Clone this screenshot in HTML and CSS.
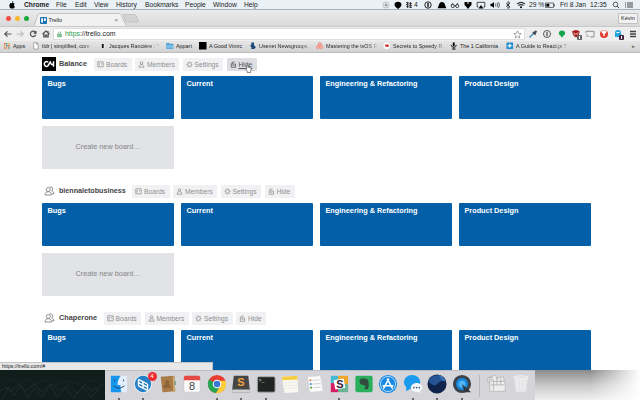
FILE: index.html
```html
<!DOCTYPE html>
<html lang="en">
<head>
<meta charset="utf-8">
<title>Trello</title>
<link rel="stylesheet" href="styles.css">
</head>
<body>
<svg width="0" height="0" class="defs">
  <symbol id="board" viewBox="0 0 7 7"><path d="M.8.8h5.4v5H.8zM2.200 2v2.600M4.700 2v1.600"/></symbol>
  <symbol id="member" viewBox="0 0 7 7"><circle cx="3.5" cy="2.1" r="1.3"/><path d="M1 6.2c0-1.6 1-2.5 2.5-2.5S6 4.600 6 6.200z"/></symbol>
  <symbol id="gear" viewBox="0 0 7 7"><circle cx="3.500" cy="3.500" r="1.900"/><path d="M3.500.5v1M3.500 5.500v1M.5 3.500h1M5.500 3.500h1M1.400 1.400l.7.7M4.900 4.900l.7.7M1.400 5.600l.7-.7M4.900 2.100l.7-.7"/></symbol>
  <symbol id="lock" viewBox="0 0 7 7"><path d="M1.300 3h4.200v3.300H1.300zM2 3V1.500l2.500-.8M2.600 4.400h1.700"/></symbol>
  <symbol id="team" viewBox="0 0 11 10"><circle cx="4.300" cy="3.500" r="2"/><path d="M1 9c0-2.200 1.200-3.300 3.300-3.300S7.500 6.800 7.500 9zM5.500 1.200c2-1 3.500.3 3.200 2-.1.800-.5 1.300-1 1.700 1.400.4 2.200 1.300 2.300 3H8"/></symbol>
</svg>

<header class="menubar">
  <div class="menus">
    <svg class="apple" viewBox="0 0 8 8"><path d="M4 2.200C5 1.700 6.200 1.900 6.700 2.700 5.500 3.500 5.800 5 6.900 5.400 6.400 7 5.400 8 4.200 7.400 2.900 8 1.900 7 1.500 5.800 1 4 2 1.300 4 2.200zM4 1.900C3.900.9 4.500.2 5.300 0 5.400 1 4.800 1.700 4 1.900z"/></svg>
    <b>Chrome</b><span>File</span><span>Edit</span><span>View</span><span>History</span><span>Bookmarks</span><span>People</span><span>Window</span><span>Help</span>
  </div>
  <div class="status">
    <svg viewBox="0 0 10 8"><circle cx="5" cy="4" r="3" fill="none" stroke="#aaa" stroke-width=".7"/><circle cx="5" cy="4" r="1.500" fill="#999"/></svg>
    <svg viewBox="0 0 10 8"><path d="M5 .8c4 0 4.400 4 1.900 5.600L5 8 3.200 6.400C.6 4.800 1 .8 5 .8z"/></svg>
    <svg viewBox="0 0 10 8"><path d="M2 1.500l6 1.200M2 3.400l6 1.200M2 5.300l6 1.200M3.500 1v6M6.500 1v6" stroke="#222" fill="none" stroke-width=".8"/></svg>
    <span>4</span>
    <svg viewBox="0 0 10 8"><circle cx="5" cy="4" r="3.200" fill="none" stroke="#222"/><path d="M4.400 2h1.300v4H4.400z"/></svg>
    <svg viewBox="0 0 10 8"><path d="M.8 6.500C2 5.500 1.500 1 5 1s3 4.500 4.200 5.500v.8H.8z"/></svg>
    <svg viewBox="0 0 10 8"><g fill="none" stroke="#222" stroke-width=".8"><circle cx="2.800" cy="5" r="1.600"/><circle cx="7.200" cy="5" r="1.600"/><path d="M1.300 4.500L3 2M6 4.500L8 2M4.300 4.700h1.400"/></g></svg>
    <svg viewBox="0 0 10 8"><path d="M1.500 1h3v2h1V1h3v3L7 5.500 5 8 3 5.500 1.500 4z"/></svg>
    <svg viewBox="0 0 10 8"><path d="M2.500 6H1.200V1.300h7.600V6H7.500" fill="none" stroke="#333" stroke-width=".9"/><path d="M5 4l2.500 3.500h-5z"/></svg>
    <svg viewBox="0 0 10 8"><path d="M.5 2.800H2L4 1v6L2 5.200H.5z"/><path d="M5.400 2.500q1 1.500 0 3M7 1.800q1.500 2.200 0 4.400M8.500 1q2 3 0 6" fill="none" stroke="#333" stroke-width=".7"/></svg>
    <svg viewBox="0 0 10 8"><path d="M3 2.200l4 3.600L5 7.500V.5l2 1.700-4 3.600" fill="none" stroke="#222" stroke-width=".8"/></svg>
    <svg viewBox="0 0 10 8"><path d="M1 3.200q4-3.800 8 0M2.500 4.700q2.500-2.200 5 0" fill="none" stroke="#333" stroke-width="1.100"/><circle cx="5" cy="6.300" r="1"/></svg>
    <span>29 %</span>
    <svg viewBox="0 0 10 8"><path d="M.5 2h8v4.400h-8zM9.500 3.300v2" fill="none" stroke="#333" stroke-width=".7"/><path d="M1.300 2.800h3v2.800h-3z"/></svg>
    <span>Fri 8 Jan</span><span>12:35</span>
    <svg viewBox="0 0 10 8"><circle cx="4.500" cy="3.500" r="2.300" fill="none" stroke="#333" stroke-width=".8"/><path d="M6.200 5.200L8 7" stroke="#333"/></svg>
    <svg viewBox="0 0 10 8"><path d="M1 2h1M1 4h1M1 6h1M3 2h6M3 4h6M3 6h6" stroke="#333" stroke-width=".9"/></svg>
  </div>
</header>

<main class="window">
  <div class="tabs">
    <div class="lights"><i class="red"></i><i class="amber"></i><i class="green"></i></div>
    <svg class="tab-shape" viewBox="0 0 106 13"><path d="M0 13L4 1.500Q4.400.5 6 .5h79q1.500 0 2 1L92 13z" fill="#f1f1f1"/><path d="M0 13L4 1.500Q4.400.5 6 .5h79q1.500 0 2 1L92 12.500" fill="none" stroke="#b5b5b5" stroke-width=".7"/><path d="M89 2.300q0-.8 1-.8h10.500q1 0 1.500 1l2.500 5.500q.3 1-.8 1H93q-1 0-1.500-1z" fill="#d3d3d3" stroke="#b5b5b5" stroke-width=".6"/></svg>
    <div class="tab">
      <svg class="favicon" viewBox="0 0 7 7"><rect width="7" height="7" rx="1" fill="#1672ae"/><path d="M1.200 1.300h1.800v4.200H1.200zM4 1.300h1.800v2.600H4z" fill="#fff"/></svg>
      <span>Trello</span><span class="close">×</span>
    </div>
    <span class="profile">Kévin</span>
  </div>

  <div class="toolbar">
    <nav class="nav">
      <svg viewBox="0 0 10 8"><path d="M8.500 4H2M4.500 1.300L1.800 4l2.700 2.700"/></svg>
      <svg class="off" viewBox="0 0 10 8"><path d="M1.500 4H8M5.500 1.300L8.200 4 5.500 6.700"/></svg>
      <svg viewBox="0 0 10 8"><path d="M7.300 2.300A2.700 2.700 0 1 0 7.700 4.700M8 .9v2.300H5.600"/></svg>
      <svg viewBox="0 0 10 8"><path d="M1.500 4L5 1l3.500 3M2.800 3.500V7h1.500V5h1.400v2h1.500V3.500M7 1v1.500"/></svg>
    </nav>
    <div class="address">
      <svg class="padlock" viewBox="0 0 6 7"><path d="M.7 3h4.600v3.500H.7z" fill="#8cc79a" stroke="#55a368" stroke-width=".6"/><path d="M1.500 3V1.800q0-1.300 1.500-1.300t1.500 1.300V3" fill="none" stroke="#66a975" stroke-width=".8"/></svg>
      <span class="url"><em>https</em>://trello.com</span>
      <svg class="star" viewBox="0 0 10 10"><path d="M5 .9l1.200 2.800 3 .3-2.300 2 .7 3L5 7.400 2.400 9l.7-3L.8 4l3-.3z" fill="#fff" stroke="#777" stroke-width=".7"/></svg>
    </div>
    <div class="extensions">
      <svg viewBox="0 0 12 12"><path d="M2.500 9.500L7 5" stroke="#4f95bf" stroke-width="1.600"/><path d="M6 4l2.700 2.500M7.500 5L9.500 3" stroke="#414953" stroke-width="2"/></svg>
      <svg viewBox="0 0 12 12"><circle cx="6" cy="6" r="3.500" fill="none" stroke="#444" stroke-width=".9"/><path d="M6 4v4" stroke="#444" stroke-width="1.200"/></svg>
      <svg viewBox="0 0 12 12"><path d="M6 2.500c3.800 0 4 4 1.600 5L6 9.700 4.400 7.500C2 6.500 2.200 2.500 6 2.500z" fill="#14a54b"/></svg>
      <svg viewBox="0 0 12 12"><path d="M2.300 3L6 2l3.500 1c0 3.500-.8 5-3.500 6.500C3.300 8 2.300 6.500 2.300 3z" fill="#a61c18"/><path d="M4 4.500v1.200q0 .8.800.8T6 5.500q1.300 1.500 2 0v-1" fill="none" stroke="#fff" stroke-width=".7"/><rect x="7" y="7" width="5" height="5" rx="1" fill="#666"/><path d="M9.500 8v3" stroke="#fff"/></svg>
      <svg viewBox="0 0 12 12"><path d="M2 5V3.300h8v5.600H6" fill="none" stroke="#777" stroke-width=".8"/><path d="M2 6.500q2 .4 2.500 2.500M2 8.300l.7.700" stroke="#777" fill="none" stroke-width=".7"/></svg>
      <svg viewBox="0 0 12 12"><circle cx="6" cy="6" r="4" fill="#df3f32"/><path d="M3.500 2.800q2.500-1 5 0Q9 5 6 6 3 5 3.500 2.800z" fill="#fff"/><path d="M6 4v4" stroke="#fff" stroke-width="1.400"/></svg>
      <svg viewBox="0 0 12 12"><path d="M2 9V5q0-3 3-3t3 3l1 4z" fill="#23a7df"/><path d="M3.500 4.500h3" stroke="#fff"/><rect x="6" y="7" width="5" height="5" rx="1" fill="#44233f"/><path d="M8.500 8v3" stroke="#fff"/></svg>
      <svg viewBox="0 0 12 12"><path d="M3 3.500h6M3 6h6M3 8.500h6" stroke="#444" stroke-width="1.300"/></svg>
    </div>
  </div>

  <div class="bookmarks">
    <svg viewBox="0 0 8 8"><path d="M1 1h1.600v1.600H1zM1 5.500h1.600v1.600H1zM5.500 3.200h1.600v1.600H5.500z" fill="#e65c49"/><path d="M3.200 1h1.600v1.600H3.200zM5.500 5.500h1.600v1.600H5.500z" fill="#5aa66b"/><path d="M5.500 1h1.600v1.600H5.500zM1 3.200h1.600v1.600H1zM3.200 5.500h1.600v1.600H3.200z" fill="#e8ad40"/><path d="M3.200 3.200h1.600v1.600H3.200z" fill="#4f7cc0"/></svg><span>Apps</span>
    <svg viewBox="0 0 8 8"><path d="M1.800.6h3L6.500 2.300v5.200H1.800zM4.800.6v1.700h1.700" fill="#fff" stroke="#777" stroke-width=".6"/></svg><span class="fade">tldr | simplified, com</span>
    <svg viewBox="0 0 8 8"><path d="M2 1h4v6H2z" fill="#eee"/><path d="M3 2h2v4.500H3z" fill="#111"/></svg><span class="fade">Jacques Rancière : ''</span>
    <svg viewBox="0 0 8 8"><path d="M.3 1h2.800l.7.900h4v5.600H.3z" fill="#4998cd"/><path d="M.5 3h7v4H.5z" fill="#77bee8"/></svg><span>Appart</span>
    <svg viewBox="0 0 8 8"><path d="M0 0h8v8H0z"/></svg><span>A Good Vimrc</span>
    <svg viewBox="0 0 8 8"><path d="M2.500.5h2.800v3L7 5v1.500L5 7.500H2.500V5L1 4l1.500-1z" fill="#1d4779"/></svg><span class="fade">Usenet Newsgroups,</span>
    <svg viewBox="0 0 8 8"><g fill="#f9b0a5" stroke="#e7766a" stroke-width=".6"><circle cx="4" cy="2.200" r="1.600"/><circle cx="2.300" cy="5.300" r="1.800"/><circle cx="5.700" cy="5.300" r="1.800"/></g></svg><span class="fade">Mastering the tvOS F</span>
    <svg viewBox="0 0 8 8"><circle cx="4" cy="4" r="3.500" fill="#fff"/><path d="M1.800 2.700h4.500l-.5 2.500H3z" fill="#ce3a31"/></svg><span class="fade">Secrets to Speedy R</span>
    <svg viewBox="0 0 8 8"><path d="M3 .5h2v4H3z"/><path d="M1.300 3q0 2.700 2.700 2.700T6.700 3M4 5.500V8M2 7.500h4" fill="none" stroke="#222"/></svg><span>The 1 California</span>
    <svg viewBox="0 0 8 8"><rect x=".5" y=".5" width="7" height="7" fill="#258fce"/><path d="M4 1.300l.8 1.900 1.900.8-1.900.8L4 6.700l-.8-1.900L1.300 4l1.900-.8z" fill="#fff"/></svg><span class="fade">A Guide to React.js T</span>
    <span>»</span>
  </div>

  <div class="page">
    <section class="org">
      <div class="org-head">
        <svg class="logo" viewBox="0 0 14 14"><path d="M0 0h14v14H0z"/><path d="M6.200 5.200Q5 4.200 3.700 4.700 2.300 5.300 2.300 7t1.400 2.300Q5 9.700 6 8.700L8.200 5l1.300 2.500h2.300M11.500 4.300v5.400" fill="none" stroke="#fff" stroke-width="1.500"/></svg>
        <h2>Balance</h2>
        <a class="btn boards"><svg><use href="#board"/></svg>Boards</a><a class="btn members"><svg><use href="#member"/></svg>Members</a><a class="btn settings"><svg><use href="#gear"/></svg>Settings</a><a class="btn hide active"><svg><use href="#lock"/></svg><u>Hide</u><svg class="pointer" viewBox="0 0 8 10"><path d="M2 5V1q.8-.8 1.500 0v2.500l3 .7q.8.300.7 1.200L6.500 8v1.500h-4V8L.7 5.500Q1 4.500 2 5z"/></svg></a>
      </div>
      <div class="grid"><div class="board">Bugs</div><div class="board">Current</div><div class="board">Engineering &amp; Refactoring</div><div class="board">Product Design</div><div class="create">Create new board…</div></div>
    </section>
    <section class="org">
      <div class="org-head">
        <svg class="team"><use href="#team"/></svg>
        <h2 class="long">biennaletobusiness</h2>
        <a class="btn boards"><svg><use href="#board"/></svg>Boards</a><a class="btn members"><svg><use href="#member"/></svg>Members</a><a class="btn settings"><svg><use href="#gear"/></svg>Settings</a><a class="btn hide"><svg><use href="#lock"/></svg>Hide</a>
      </div>
      <div class="grid"><div class="board">Bugs</div><div class="board">Current</div><div class="board">Engineering &amp; Refactoring</div><div class="board">Product Design</div><div class="create">Create new board…</div></div>
    </section>
    <section class="org">
      <div class="org-head">
        <svg class="team"><use href="#team"/></svg>
        <h2 class="medium">Chaperone</h2>
        <a class="btn boards"><svg><use href="#board"/></svg>Boards</a><a class="btn members"><svg><use href="#member"/></svg>Members</a><a class="btn settings"><svg><use href="#gear"/></svg>Settings</a><a class="btn hide"><svg><use href="#lock"/></svg>Hide</a>
      </div>
      <div class="grid"><div class="board">Bugs</div><div class="board">Current</div><div class="board">Engineering &amp; Refactoring</div><div class="board">Product Design</div></div>
    </section>
    <div class="link-status">https://trello.com/#</div>
  </div>
</main>

<footer class="desktop">
  <svg class="forest" viewBox="0 0 105 30"><path d="M0 0h105v30H0z" fill="#101d1a"/><g fill="none" stroke="#274039" stroke-width="1" opacity=".5"><path d="M2 29l7-12 5 9 7-11 7 13 6-10 8 9 8-12 7 12 9-9 7 10 10-11 8 10 8-8"/><path d="M0 21l6-4 4 5 9-8 5 7 11-7 6 8 10-8 8 7 9-6 9 8 8-9 7 7 12-7"/><path d="M5 13l7-4 6 4 9-3 8 4 11-4 9 5 10-4 12 3 10-4 12 2" opacity=".5"/></g></svg>
  <div class="dock">
    <div class="app running"><svg viewBox="0 0 22 22"><path d="M2 2h18v18H2z" fill="#e2effa"/><path d="M2 2h11Q9 7 9.500 12h3q0 4 1 8H2z" fill="#1796ed"/><path d="M6 6v2M16 6v2M5 13q6 5 12 0" fill="none" stroke="#164370" stroke-width="1"/></svg></div>
    <div class="app running"><svg viewBox="0 0 22 22"><circle cx="11" cy="11" r="10" fill="#eaf3fa"/><circle cx="11" cy="11" r="9" fill="#2680c5"/><path d="M6 6l10 5M6 9.500l10 5M6 13l10 5M6 6v7M16 11v7M11 8.500v7" stroke="#fff" stroke-width="1.500"/></svg><span class="badge">4</span></div>
    <div class="app"><svg viewBox="0 0 22 22"><path d="M3 3l15-1 1 17-14 1z" fill="#a77a48"/><path d="M16 3l2-.5 1 17-2 .2z" fill="#c8aa70"/><circle cx="10" cy="9" r="2.200" fill="#8c6236"/><path d="M6 15q0-4 4-4t4 4z" fill="#8c6236"/><path d="M18.300 8h1.500v4h-1.300z" fill="#6da0a0"/></svg></div>
    <div class="app"><svg viewBox="0 0 22 22"><rect x="2" y="2" width="18" height="18" rx="2" fill="#fafafa" stroke="#bbb" stroke-width=".5"/><path d="M2 7V4q0-2 2-2h14q2 0 2 2v3z" fill="#e54943"/></svg><span class="date">8</span></div>
    <div class="app running"><svg viewBox="0 0 22 22"><circle cx="11" cy="11" r="10" fill="#e83e32"/><path d="M2.300 6A10 10 0 0 0 10 21L14.500 13 11 11z" fill="#25a452"/><path d="M20.400 7.500H11L14.800 13 10 21A10 10 0 0 0 20.400 7.500z" fill="#ffce3c"/><circle cx="11" cy="11" r="4.700" fill="#fff"/><circle cx="11" cy="11" r="3.600" fill="#3977d6"/></svg></div>
    <div class="app running"><svg viewBox="0 0 22 22"><path d="M3 2h16l2 18H1z" fill="#464646"/><path d="M1.500 17h19l.5 3H1z" fill="#d3d3d3"/></svg><span class="sublime">S</span></div>
    <div class="app running"><svg viewBox="0 0 22 22"><rect x="1.500" y="3" width="19.500" height="17" rx="1.500" fill="#202523" stroke="#aaa" stroke-width="1"/></svg><span class="prompt">&gt;_</span></div>
    <div class="app"><svg viewBox="0 0 22 22"><path d="M2 3l17-1 1 18-15 1z" fill="#f9f8f0"/><path d="M2 3l17-1 .3 4L2.500 7z" fill="#f5ce43"/><path d="M4 10l15-1M4 13l15-1M5 16l14-1" stroke="#ddd" stroke-width=".6"/></svg></div>
    <div class="app"><svg viewBox="0 0 22 22"><path d="M3 3l14-1 3 17-15 1z" fill="#fafafa" stroke="#ccc" stroke-width=".5"/><path d="M8 7l8-.5M8 11l9-.5M9 15l8-.5" stroke="#bbb" stroke-width=".7"/><circle cx="6" cy="7" r="1.200" fill="#e58354"/><circle cx="6.300" cy="11" r="1.200" fill="#498fcb"/><circle cx="6.800" cy="15" r="1.200" fill="#67ab55"/></svg></div>
    <div class="app running"><svg viewBox="0 0 22 22"><path d="M2 2h8v8H2z" fill="#44b8d3"/><path d="M10 2h11v9H10z" fill="#eda82a"/><path d="M2 10h8v10H2z" fill="#d91d65"/><path d="M10 11h11v9H10z" fill="#6bb493"/><path d="M5 7l11-2 2 10-11 2z" fill="#fff"/></svg><span class="slack">S</span></div>
    <div class="app"><svg viewBox="0 0 22 22"><rect x="1.500" y="2" width="19" height="18" rx="2" fill="#29ae5b"/><path d="M6 8l3-3q7-1 7 4 1 7-2 8-3 0-2-3h1v-1q-2 0-2-1-3 0-4-1z" fill="#304d40"/><path d="M5.500 7L8 4.500V7z" fill="#304d40"/></svg></div>
    <div class="app"><svg viewBox="0 0 22 22"><circle cx="11" cy="11" r="10" fill="#1989e2"/><circle cx="11" cy="11" r="8.300" fill="none" stroke="#bee3ff" stroke-width="1"/><path d="M6 16l6-11M10 5l6 11M5 13h12" stroke="#fff" stroke-width="1.600"/></svg></div>
    <div class="app running"><svg viewBox="0 0 22 22"><ellipse cx="10" cy="9" rx="9" ry="8" fill="#1b9bee"/><path d="M4 14l-1 5 6-3z" fill="#1b9bee"/><ellipse cx="15" cy="15" rx="6.500" ry="5" fill="#f5f8fa"/><path d="M18 18l2 3-5-2z" fill="#f5f8fa"/><g fill="#357"><circle cx="12" cy="15" r=".9"/><circle cx="15" cy="15" r=".9"/><circle cx="18" cy="15" r=".9"/></g></svg></div>
    <div class="app running"><svg viewBox="0 0 22 22"><circle cx="11" cy="11" r="10.500" fill="#10234b"/><path d="M1.500 8Q5 0 13 1.500q6 2 7 7-5-2-8 2-4 5-10.500-2.500z" fill="#255594"/><path d="M13 1q6 2 7 7-5-1-7-7z" fill="#3475b9"/></svg></div>
    <div class="app running"><svg viewBox="0 0 22 22"><circle cx="11" cy="11" r="10" fill="#3b434c"/><circle cx="11" cy="11" r="6.500" fill="#168ce3"/><circle cx="11" cy="11" r="3.700" fill="#53b4f4"/><path d="M11 11l10 9h-7z" fill="#303840"/></svg></div>
    <i class="separator"></i>
    <div class="app downloads"><svg viewBox="0 0 22 22"><path d="M1 4l5-1 1-2 3 1v3l8-2 1 5 1 3v8H3V9H1z" fill="#eee" stroke="#999" stroke-width=".5"/><path d="M2 4h5M2 6h4M2 8h4M7 8h12M4 12h15M7 6v12M11 4v8M15 5v7" stroke="#999" stroke-width=".7"/></svg></div>
    <div class="app trash"><svg viewBox="0 0 22 22"><path d="M3 3h16l-2.500 17h-11z" fill="#e8e8ea" opacity=".8"/><ellipse cx="11" cy="3.500" rx="8" ry="1.500" fill="#ddd" stroke="#f8f8f8" stroke-width=".8"/><path d="M6.500 6l1 12M11 6v12M15.500 6l-1 12" stroke="#fafafa" stroke-width=".8"/></svg></div>
  </div>
</footer>
</body>
</html>
```
FILE: styles.css
```css
* { box-sizing: border-box; }
body {
  margin: 0;
  width: 640px;
  height: 400px;
  overflow: hidden;
  display: flex;
  flex-direction: column;
  background: #fff;
  color: #222;
  font: 7px/10px "Liberation Sans", sans-serif;
}
svg { display: block; overflow: visible; }
.defs { position: absolute; }

.menubar {
  flex: 0 0 10px;
  height: 10px;
  min-height: 0;
  display: flex;
  justify-content: space-between;
  background: #e9f0f6;
  border-bottom: 1px solid #a5b0b8;
  white-space: nowrap;
}
.menus {
  display: grid;
  grid-template-columns: 16px 32px 19px 19px 22px 29px 40px 28px 31px 20px;
  padding-left: 8px;
  font-size: 6.7px;
}
.apple { width: 8px; height: 8px; margin-top: 1px; }
.status {
  display: grid;
  grid-template-columns: 12px 11px 9.500px 10px 14px 13px 13px 13px 14px 13px 13px 12px 17px 14px 30px 22px 13px 16px;
  font-size: 6.7px;
}
.status svg { width: 10px; height: 8px; margin-top: 1px; }
.status span { padding-left: 1px; }

.window { flex: 0 0 360px; display: flex; flex-direction: column; }
.tabs {
  flex: 0 0 17px;
  display: flex;
  align-items: flex-end;
  position: relative;
  background: linear-gradient(#ebebeb, #d9d9d9);
  border-bottom: 1px solid #c8c8c8;
}
.lights { display: flex; gap: 3.500px; padding: 0 0 5px 5.500px; width: 34px; }
.lights i { width: 5.500px; height: 5.500px; border-radius: 50%; }
.red { background: #f34c47; }
.amber { background: #f5b82c; }
.green { background: #19ad38; }
.tab-shape { width: 106px; height: 13px; }
.tab {
  display: flex;
  align-items: center;
  margin-left: -100px;
  width: 78px;
  height: 12px;
  z-index: 1;
  font-size: 5.500px;
}
.favicon { width: 7px; height: 7px; margin-right: 1.500px; }
.close { margin-left: auto; color: #777; font-size: 6px; }
.profile {
  margin: 0 2px 2px auto;
  width: 20px;
  height: 11px;
  text-align: center;
  border: 1px solid #c2c2c2;
  border-radius: 1px;
  background: #f2f2f2;
  font-size: 5.500px;
  line-height: 9px;
}

.toolbar { flex: 0 0 14px; display: flex; background: #eee; padding-top: 1px; }
.nav { display: flex; gap: 2.700px; width: 53px; padding: 2px 0 0 2.500px; }
.nav svg { width: 10px; height: 8px; fill: none; stroke: #555; stroke-width: 1.200; }
.nav .off { stroke: #bbb; }
.address {
  width: 472px;
  height: 12px;
  display: flex;
  align-items: center;
  padding: 0 2px 0 3px;
  border: 1px solid #ddd;
  border-radius: 1px;
  background: #fff;
}
.padlock { width: 5px; height: 7px; }
.url { margin-left: 3px; font-size: 6.900px; }
.url em { font-style: normal; color: #2a9a46; }
.star { width: 9px; height: 9px; margin-left: auto; }
.extensions {
  display: grid;
  grid-template-columns: repeat(5, 14.300px) 15px 14px 12px;
  padding-left: 2px;
}
.extensions svg { width: 12px; height: 12px; }

.bookmarks {
  flex: 0 0 12px;
  display: grid;
  grid-template-columns: 10px 19px 10px 57px 10px 57px 10px 23px 10px 40px 10px 57px 10px 57px 10px 57px 10px 46px 10px 115.500px 8px;
  align-items: center;
  padding: 0 0 1px 3px;
  background: linear-gradient(#e6e6e6, #d2d2d2);
  border-bottom: 1px solid #bcbcbc;
  font-size: 5.400px;
  white-space: nowrap;
}
.bookmarks svg { width: 7.500px; height: 7.500px; }
.fade {
  width: 52px;
  overflow: hidden;
  color: transparent;
  background: linear-gradient(90deg, #222 78%, #bbb);
  background-clip: text;
}

.page { flex: 0 0 317px; position: relative; overflow: hidden; padding: 4px 49px 0 42px; background: #fff; }
.org { height: 127px; }
.org-head { display: flex; height: 19px; align-items: flex-start; }
.logo { width: 14px; height: 14px; }
.team { width: 11px; height: 10px; margin: 2px 1px 0 2px; fill: none; stroke: #777; stroke-width: .8; }
h2 { margin: 0; padding: 1px 0 0 3px; width: 38px; color: #444; font-size: 7.300px; line-height: 12px; white-space: nowrap; }
.long { width: 76px; font-size: 7.150px; }
.medium { width: 47.500px; }
.btn {
  position: relative;
  display: flex;
  align-items: center;
  height: 13px;
  margin: 1px 3.500px 0 0;
  padding-left: 3px;
  border-radius: 1px;
  background: #f1f1f4;
  color: #8e8e8e;
  font-size: 6.700px;
}
.btn > svg { width: 7px; height: 7px; margin-right: 2px; fill: none; stroke: #888; stroke-width: .7; }
.boards { width: 37.500px; }
.members { width: 44px; }
.settings { width: 40.500px; }
.hide { width: 30px; }
.btn.active { background: #dedee2; color: #555; }
.active > svg { stroke: #444; }
.active .pointer { position: absolute; left: 18px; top: 6px; width: 7px; height: 9px; margin: 0; fill: #fff; stroke: #333; }
.grid { display: grid; grid-template-columns: repeat(4, 132px); grid-auto-rows: 42.500px; gap: 7.500px 7px; }
.board {
  padding: 3px 5.500px;
  border-radius: 1px;
  background: #025fa8;
  color: #fff;
  font-size: 7.300px;
  font-weight: bold;
  white-space: nowrap;
}
.create { display: grid; place-items: center; border-radius: 1px; background: #e2e3e7; color: #858585; font-size: 7.250px; }
.link-status {
  position: absolute;
  left: 0;
  bottom: 0;
  width: 213px;
  height: 8px;
  padding-left: 2px;
  background: #e8e8e8;
  border: solid #c4c4c4;
  border-width: 1px 1px 0 0;
  font-size: 5.300px;
  line-height: 7px;
}

.desktop {
  flex: 0 0 30px;
  display: flex;
  background: linear-gradient(90deg, rgba(255, 255, 255, 0) 590px, #fff 640px), linear-gradient(#8a8a8a, #c8c8c8 50%, #f0f0f0);
}
.forest { width: 105px; height: 30px; }
.dock {
  display: flex;
  width: 430px;
  padding: 3px 0 0 2.500px;
  background: #d5d4d9;
  border-top: 1px solid #bdbdc4;
}
.app { position: relative; flex: 0 0 24.500px; height: 26px; padding-left: 1px; }
.app svg { width: 20px; height: 20px; }
.running::after { content: ""; position: absolute; left: 10px; bottom: 0; width: 2px; height: 2px; border-radius: 50%; background: #444; }
.badge, .date, .sublime, .prompt, .slack { position: absolute; text-align: center; }
.badge { right: 0; top: -2px; width: 9px; height: 9px; border-radius: 50%; background: #f02b2e; color: #fff; font-size: 6px; line-height: 9px; }
.date { left: 1px; top: 6px; width: 20px; font-size: 11px; line-height: 12px; color: #444; }
.sublime { left: 1px; top: 2px; width: 20px; font: bold 11px/13px "Liberation Sans", sans-serif; color: #f0a241; }
.prompt { left: 4px; top: 4px; font: 5px/6px "Liberation Mono", monospace; color: #eee; }
.slack { left: 2px; top: 4px; width: 20px; font: bold 11px/12px "Liberation Sans", sans-serif; color: #391b38; }
.separator { width: 1px; height: 22px; margin: 1px 4px 0 4px; background: #b8b7bd; }
.downloads { margin-left: 1.500px; }
```
